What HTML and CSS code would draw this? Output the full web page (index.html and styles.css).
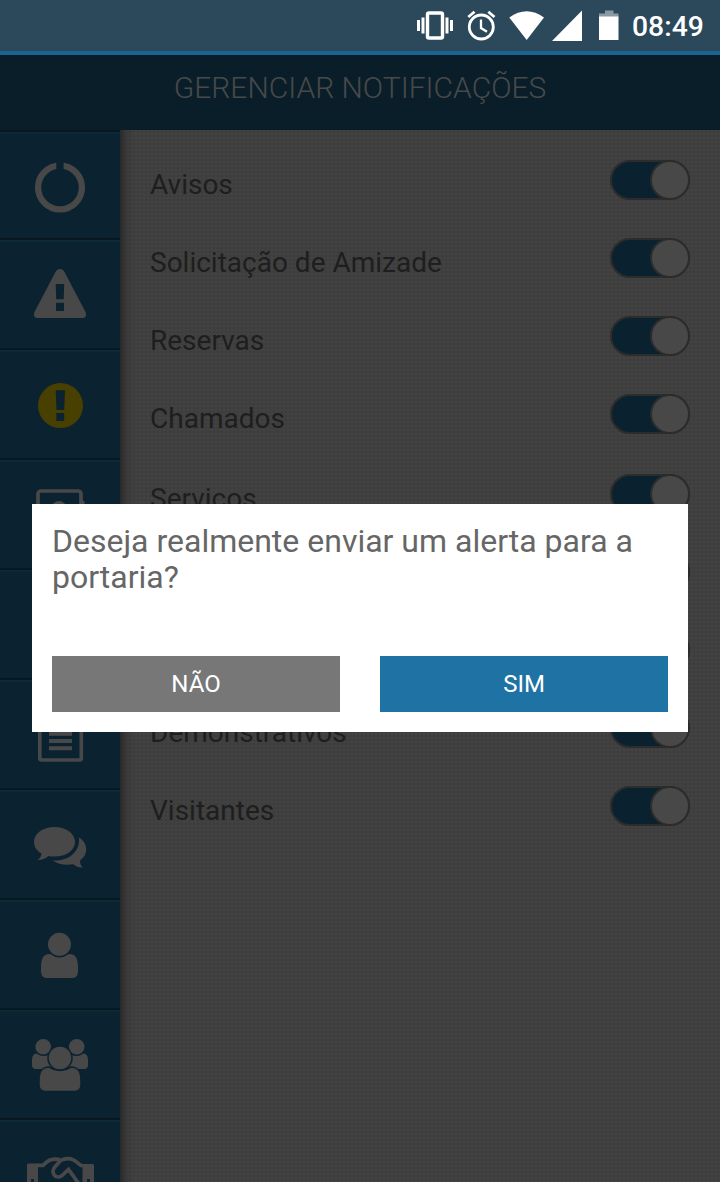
FILE: index.html
```html
<!DOCTYPE html>
<html lang="pt-BR">
<head>
    <meta charset="UTF-8">
    <meta name="viewport" content="width=device-width, initial-scale=1.0">
    <title>Gerenciar Notificações</title>
    <link rel="stylesheet" href="styles.css">
</head>
<body>

<div class="statusbar">
    <svg width="320" height="51" viewBox="400 0 320 51" fill="#fff">
        <!-- vibrate -->
        <rect x="427.5" y="13" width="15" height="25" rx="1.5" fill="none" stroke="#fff" stroke-width="3.4"/>
        <path d="M417 20h3v11h-3zM421.500 17.500h3v16h-3zM445.500 17.500h3v16h-3zM450 20h3v11h-3z"/>
        <!-- alarm -->
        <g fill="none" stroke="#fff" stroke-width="2.800">
            <circle cx="481.300" cy="27" r="12"/>
            <path d="M481 19.500v8.500l6 3.700" stroke-width="2.300"/>
            <path d="M468.300 17l6.200-5.200M494.500 17l-6.200-5.200"/>
        </g>
        <!-- wifi -->
        <path d="M509.300 17.500Q526.700 5 544 17.500L526.700 40z"/>
        <!-- signal -->
        <path d="M552 41L582 10.500V41z"/>
        <!-- battery -->
        <path d="M605 10.500h8.500v3h5V17H599v-3.500h6z" fill="#899aa3"/>
        <path d="M599 16.500h19.500V40H599z"/>
    </svg>
    <span class="clock">08:49</span>
</div>

<div class="header">GERENCIAR NOTIFICAÇÕES</div>

<div class="main">
    <div class="sidebar">
        <div class="item">
            <svg viewBox="0 0 120 110">
                <circle cx="60" cy="57.500" r="21.900" class="ring"/>
                <path class="hole" d="M56.300 30h7.300v14h-7.300z"/>
            </svg>
        </div>
        <div class="item">
            <svg viewBox="0 0 120 110">
                <path d="M60 29q3 0 4.500 3l21 40q2 6-3.500 6H38q-5.500 0-3.500-6l21-40q1.500-3 4.500-3z"/>
                <path class="hole" d="M55.700 44h8.500l-.5 15.300h-7.500zM56 62.700h8V71h-8z"/>
            </svg>
        </div>
        <div class="item yellow">
            <svg viewBox="0 0 120 110">
                <circle cx="60.500" cy="55.600" r="22.500"/>
                <path class="hole" d="M55.700 40.300h9.300l-.8 19.700h-7.700zM56.300 63h7.900v8h-7.900z"/>
            </svg>
        </div>
        <div class="item">
            <svg viewBox="0 0 120 110">
                <rect x="38" y="31" width="43" height="46" rx="3" class="line"/>
                <circle cx="59" cy="48.500" r="7.500"/>
                <path d="M82 41h2.500v8H82z"/>
            </svg>
        </div>
        <div class="item"></div>
        <div class="item">
            <svg viewBox="0 0 120 110">
                <rect x="39.800" y="31" width="41.500" height="49" rx="2" class="line"/>
                <path d="M49 51.700h23v4H49zM49 59h23v4H49zM49 66.300h23v4H49z"/>
            </svg>
        </div>
        <div class="item">
            <svg viewBox="0 0 120 110">
                <path d="M79 47.500C88 53 89 64 80 70.500Q79.500 74 82.500 77.500Q78 78 73 74.300Q61 76 52.500 70.500C67 71.500 80.500 63 79 47.500z"/>
                <path d="M54.500 37C66 37 75 43.500 75 52S66 66.500 54.500 66.500Q51 66.500 48.500 66Q43 70.500 37.500 70Q41 67.500 41.500 63.500C37 61 34 57 34 52C34 43.500 43 37 54.500 37z"/>
            </svg>
        </div>
        <div class="item">
            <svg viewBox="0 0 120 110">
                <path d="M41 68C41 58 43.500 54 50 54Q59.500 61 69 54C75.500 54 78 58 78 68V72Q77.500 78 72 78H47Q41.500 78 41 72z"/>
                <circle cx="59.500" cy="44.300" r="11.500"/>
            </svg>
        </div>
        <div class="item">
            <svg viewBox="0 0 120 110">
                <path d="M32 50Q32 44 36.500 43.500Q43 48 49 44.500L53 59H36Q32 59 32 55zM88 50Q88 44 83.500 43.500Q77 48 71 44.500L67 59H84Q88 59 88 55z"/>
                <circle cx="43.200" cy="36.700" r="7.800"/>
                <circle cx="76.700" cy="36.700" r="7.800"/>
                <path class="cut" d="M39 71C39 61 42 57 49 57Q60 64 71 57C78 57 81 61 81 71V76Q80 81.500 75 81.500H45Q40 81.500 39 76z"/>
                <circle class="cut" cx="60" cy="48" r="12"/>
            </svg>
        </div>
        <div class="item">
            <svg viewBox="0 0 120 110">
                <path d="M28 43.500h10V80H27V44.500zM82.500 44H93l1 1v35H82.500z"/>
                <path class="line" d="M37 45.300h6C49 39.500 52 38.500 60 39.500M60.500 40.500L54 48C51.500 53 54.500 57 58.500 57C62 57 64 53 68.500 49.500L79 64M60.500 40.500Q64 38.500 69 38.700C74 38.800 76 42 81 45.500h2"/>
                <path class="hole" d="M31 59h3v5h-3zM87 59h3v5h-3z"/>
            </svg>
        </div>
    </div>

    <div class="content">
        <div class="row"><span>Avisos</span><i class="toggle"></i></div>
        <div class="row"><span>Solicitação de Amizade</span><i class="toggle"></i></div>
        <div class="row"><span>Reservas</span><i class="toggle"></i></div>
        <div class="row"><span>Chamados</span><i class="toggle"></i></div>
        <div class="row second"><span>Serviços</span><i class="toggle"></i></div>
        <div class="row"><span></span><i class="toggle"></i></div>
        <div class="row"><span></span><i class="toggle"></i></div>
        <div class="row"><span>Demonstrativos</span><i class="toggle"></i></div>
        <div class="row"><span>Visitantes</span><i class="toggle"></i></div>
    </div>
</div>

<div class="dialog">
    <p>Deseja realmente enviar um alerta para a portaria?</p>
    <div class="buttons">
        <button class="no">NÃO</button>
        <button class="yes">SIM</button>
    </div>
</div>

</body>
</html>
```
FILE: styles.css
```css
* {
    box-sizing: border-box;
}

body {
    margin: 0;
    height: 1182px;
    display: flex;
    flex-direction: column;
    overflow: hidden;
    position: relative;
    font-family: Roboto, sans-serif;
    background-color: #414141;
}

.statusbar {
    height: 51px;
    flex: none;
    display: flex;
    justify-content: flex-end;
    background-color: #2c495b;
}

.statusbar svg {
    flex: none;
    margin-right: -88px;
}

.clock {
    width: 88px;
    font-size: 28.3px;
    font-weight: 500;
    line-height: 54px;
    color: #fff;
}

.header {
    height: 79px;
    flex: none;
    border-top: 4px solid #1b6591;
    background-color: #0a1e29;
    color: #48494a;
    font-size: 30px;
    font-weight: 300;
    line-height: 66px;
    text-align: center;
}

.main {
    flex: 1;
    min-height: 0;
    display: flex;
}

.sidebar {
    width: 120px;
    flex: none;
    border-top: 2px solid #071821;
}

.item {
    height: 110px;
    background-color: #0b2230;
    border-top: 2px solid #0c2938;
    border-bottom: 2px solid #071821;
}

.item:first-child {
    height: 108px;
}

.item svg {
    display: block;
    width: 120px;
    height: 110px;
    margin-top: -2px;
    fill: #484848;
}

.item:first-child svg {
    margin-top: -4px;
}

.item.yellow svg {
    fill: #484000;
}

.item .hole {
    fill: #0b2230;
}

.item .ring {
    fill: none;
    stroke: #484848;
    stroke-width: 6.3;
}

.item .line {
    fill: none;
    stroke: #484848;
    stroke-width: 3.7;
}

.item .cut {
    stroke: #0b2230;
    stroke-width: 1.5;
}

.content {
    flex: 1;
    padding: 30px 30px 0;
    background-image: linear-gradient(to right, #292929, rgba(50, 50, 50, 0.5) 6px, rgba(64, 64, 64, 0) 14px), radial-gradient(circle, #3b3b3b 1px, rgba(59, 59, 59, 0) 1.5px);
    background-size: 100% 100%, 4px 4px;
}

.row {
    height: 78px;
    display: flex;
    justify-content: space-between;
    font-size: 28px;
    line-height: 49px;
    color: #1e1e1e;
}

.second {
    margin-top: 2px;
}

.toggle {
    width: 80px;
    height: 40px;
    display: flex;
    justify-content: flex-end;
    border: 2px solid #2c2c2c;
    border-radius: 20px;
    background-color: #0a2230;
}

.toggle::after {
    content: "";
    width: 36px;
    border-radius: 50%;
    background-color: #484848;
    box-shadow: 0 0 0 2px #2c2c2c;
}

.dialog {
    position: absolute;
    left: 32px;
    top: 504px;
    width: 656px;
    height: 228px;
    padding: 19px 20px 20px;
    display: flex;
    flex-direction: column;
    justify-content: space-between;
    background-color: #fff;
}

.dialog p {
    margin: 0;
    font-size: 32px;
    line-height: 36px;
    color: #666;
}

.buttons {
    display: flex;
    gap: 40px;
}

.buttons button {
    flex: 1;
    height: 56px;
    padding: 0;
    border: none;
    font-family: inherit;
    font-size: 24px;
    color: #fff;
}

.no {
    background-color: #777;
}

.yes {
    background-color: #1f73a4;
}
```
